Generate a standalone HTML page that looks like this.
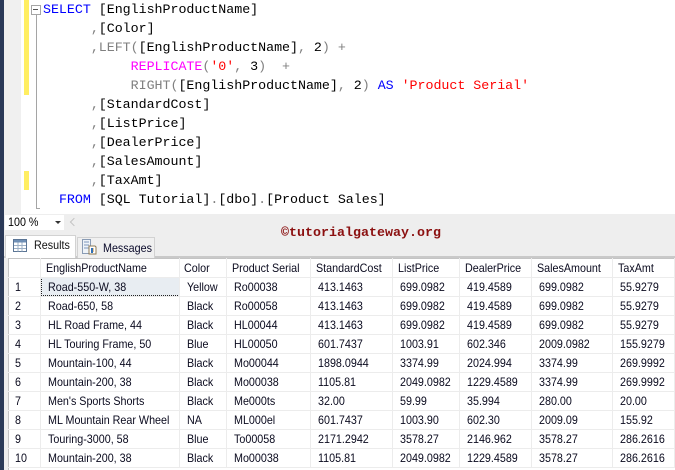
<!DOCTYPE html>
<html><head><meta charset="utf-8"><style>
html,body{margin:0;padding:0;width:675px;height:470px;overflow:hidden;background:#fff}
div,span{position:absolute;white-space:pre}
.c{font:13.33px/21px "Liberation Mono",monospace;letter-spacing:-.03px;color:#000;left:43px;height:19px}
.c span{position:static}
.b{color:#0000ff}.g{color:#808080}.m{color:#ff00ff}.r{color:#ff0000}
.t{font:12px/21px "Liberation Sans",sans-serif;color:#0a0a1e;height:19px;transform:scaleX(.895);transform-origin:0 0}
.v{background:#ececec;width:1px;top:258px;height:209px}
.h{background:#ececec;height:1px;left:8px;width:667px}
</style></head><body>
<div style="left:0;top:0;width:4px;height:470px;background:#2b3a58"></div>
<div style="left:4px;top:0;width:17px;height:214px;background:#f0f0f0"></div>
<div style="left:24px;top:0;width:5px;height:95px;background:#ffee62"></div>
<div style="left:24px;top:171px;width:5px;height:19px;background:#ffee62"></div>
<div style="left:36px;top:14px;width:1px;height:194px;background:#a5a5a5"></div>
<div style="left:36px;top:208px;width:4px;height:1px;background:#a5a5a5"></div>
<div style="left:31px;top:5px;width:8px;height:8px;border:1px solid #a5a5a5;background:#fff"></div>
<div style="left:33px;top:9px;width:5px;height:1px;background:#555"></div>

<div class="c" style="top:0"><span class="b">SELECT</span> [EnglishProductName]</div>
<div class="c" style="top:19px">      <span class="g">,</span>[Color]</div>
<div class="c" style="top:38px">      <span class="g">,LEFT(</span>[EnglishProductName]<span class="g">,</span> 2<span class="g">) +</span></div>
<div class="c" style="top:57px">           <span class="m">REPLICATE</span><span class="g">(</span><span class="r">'0'</span><span class="g">,</span> 3<span class="g">)  +</span></div>
<div class="c" style="top:76px">           <span class="g">RIGHT(</span>[EnglishProductName]<span class="g">,</span> 2<span class="g">)</span> <span class="b">AS</span> <span class="r">'Product Serial'</span></div>
<div class="c" style="top:95px">      <span class="g">,</span>[StandardCost]</div>
<div class="c" style="top:114px">      <span class="g">,</span>[ListPrice]</div>
<div class="c" style="top:133px">      <span class="g">,</span>[DealerPrice]</div>
<div class="c" style="top:152px">      <span class="g">,</span>[SalesAmount]</div>
<div class="c" style="top:171px">      <span class="g">,</span>[TaxAmt]</div>
<div class="c" style="top:190px">  <span class="b">FROM</span> [SQL Tutorial]<span class="g">.</span>[dbo]<span class="g">.</span>[Product Sales]</div>

<div style="left:4px;top:214px;width:671px;height:256px;background:#eeeeee"></div>
<div style="left:4px;top:256px;width:671px;height:2px;background:#c9c9c9"></div>
<div style="left:5px;top:215px;width:59px;height:15px;background:#fff"></div>
<div class="t" style="left:8px;top:212px;color:#000">100 %</div>
<div style="left:55px;top:221px;width:0;height:0;border-left:3px solid transparent;border-right:3px solid transparent;border-top:3px solid #333"></div>
<div style="left:71px;top:219px;width:5px;height:5px;border-left:1px solid #c4c4c4;border-bottom:1px solid #c4c4c4;transform:rotate(45deg)"></div>

<div style="left:5px;top:235px;width:71px;height:23px;background:#fff;border:1px solid #d2d2d2;border-bottom:none;box-sizing:border-box"></div>
<svg style="position:absolute;left:13px;top:239px" width="14" height="13" viewBox="0 0 14 13"><rect x=".5" y=".5" width="13" height="12" fill="#fff" stroke="#5b7595"/><rect x="1" y="1" width="12" height="2.5" fill="#6f8fb5"/><path d="M1 6.5h12M1 9.5h12M5 3.5v9M9 3.5v9" stroke="#9db0c6" fill="none"/></svg>
<div class="t" style="left:34px;top:235px;color:#111">Results</div>
<div style="left:77px;top:237px;width:78px;height:21px;background:#f0f0f0;border:1px solid #d2d2d2;border-bottom:none;box-sizing:border-box"></div>
<svg style="position:absolute;left:82px;top:239px" width="15" height="16" viewBox="0 0 15 16"><rect x=".5" y=".5" width="8" height="14" fill="#eef3f8" stroke="#8a9cb5"/><path d="M2 3h5M2 6h5M2 9h5" stroke="#7d97bd"/><path d="M7 7h6l1 1v7H7z" fill="#fff" stroke="#8d7a55"/><path d="M9 10h3M9 12h3" stroke="#d08a20"/><rect x="9" y="9" width="2" height="5" fill="#2f6fb5"/></svg>
<div class="t" style="left:103px;top:238px;color:#0a0a2a">Messages</div>

<div style="left:8px;top:258px;width:667px;height:212px;background:#fff"></div>
<div style="left:8px;top:258px;width:667px;height:1px;background:#c4c4c4"></div>
<div style="left:8px;top:258px;width:1px;height:212px;background:#c4c4c4"></div>
<div style="left:41px;top:277px;width:139px;height:19px;background:#e8edf2;box-sizing:border-box;border:1px dotted #222"></div>

<div class="v" style="left:40px"></div><div class="v" style="left:179px"></div><div class="v" style="left:226px"></div><div class="v" style="left:310px"></div><div class="v" style="left:392px"></div><div class="v" style="left:459px"></div><div class="v" style="left:531px"></div><div class="v" style="left:612px"></div><div class="v" style="left:674px"></div>
<div class="h" style="top:277px"></div><div class="h" style="top:296px"></div><div class="h" style="top:315px"></div><div class="h" style="top:334px"></div><div class="h" style="top:353px"></div><div class="h" style="top:372px"></div><div class="h" style="top:391px"></div><div class="h" style="top:410px"></div><div class="h" style="top:429px"></div><div class="h" style="top:448px"></div><div class="h" style="top:467px"></div>

<div class="t" style="left:46px;top:258px">EnglishProductName</div><div class="t" style="left:184px;top:258px">Color</div><div class="t" style="left:232px;top:258px">Product Serial</div><div class="t" style="left:316px;top:258px">StandardCost</div><div class="t" style="left:398px;top:258px">ListPrice</div><div class="t" style="left:465px;top:258px">DealerPrice</div><div class="t" style="left:537px;top:258px">SalesAmount</div><div class="t" style="left:618px;top:258px">TaxAmt</div>

<div class="t" style="left:15px;top:277px">1</div><div class="t" style="left:48px;top:277px">Road-550-W, 38</div><div class="t" style="left:187px;top:277px">Yellow</div><div class="t" style="left:234px;top:277px">Ro00038</div><div class="t" style="left:318px;top:277px">413.1463</div><div class="t" style="left:400px;top:277px">699.0982</div><div class="t" style="left:467px;top:277px">419.4589</div><div class="t" style="left:539px;top:277px">699.0982</div><div class="t" style="left:620px;top:277px">55.9279</div>

<div class="t" style="left:15px;top:296px">2</div><div class="t" style="left:48px;top:296px">Road-650, 58</div><div class="t" style="left:187px;top:296px">Black</div><div class="t" style="left:234px;top:296px">Ro00058</div><div class="t" style="left:318px;top:296px">413.1463</div><div class="t" style="left:400px;top:296px">699.0982</div><div class="t" style="left:467px;top:296px">419.4589</div><div class="t" style="left:539px;top:296px">699.0982</div><div class="t" style="left:620px;top:296px">55.9279</div>

<div class="t" style="left:15px;top:315px">3</div><div class="t" style="left:48px;top:315px">HL Road Frame, 44</div><div class="t" style="left:187px;top:315px">Black</div><div class="t" style="left:234px;top:315px">HL00044</div><div class="t" style="left:318px;top:315px">413.1463</div><div class="t" style="left:400px;top:315px">699.0982</div><div class="t" style="left:467px;top:315px">419.4589</div><div class="t" style="left:539px;top:315px">699.0982</div><div class="t" style="left:620px;top:315px">55.9279</div>

<div class="t" style="left:15px;top:334px">4</div><div class="t" style="left:48px;top:334px">HL Touring Frame, 50</div><div class="t" style="left:187px;top:334px">Blue</div><div class="t" style="left:234px;top:334px">HL00050</div><div class="t" style="left:318px;top:334px">601.7437</div><div class="t" style="left:400px;top:334px">1003.91</div><div class="t" style="left:467px;top:334px">602.346</div><div class="t" style="left:539px;top:334px">2009.0982</div><div class="t" style="left:620px;top:334px">155.9279</div>

<div class="t" style="left:15px;top:353px">5</div><div class="t" style="left:48px;top:353px">Mountain-100, 44</div><div class="t" style="left:187px;top:353px">Black</div><div class="t" style="left:234px;top:353px">Mo00044</div><div class="t" style="left:318px;top:353px">1898.0944</div><div class="t" style="left:400px;top:353px">3374.99</div><div class="t" style="left:467px;top:353px">2024.994</div><div class="t" style="left:539px;top:353px">3374.99</div><div class="t" style="left:620px;top:353px">269.9992</div>

<div class="t" style="left:15px;top:372px">6</div><div class="t" style="left:48px;top:372px">Mountain-200, 38</div><div class="t" style="left:187px;top:372px">Black</div><div class="t" style="left:234px;top:372px">Mo00038</div><div class="t" style="left:318px;top:372px">1105.81</div><div class="t" style="left:400px;top:372px">2049.0982</div><div class="t" style="left:467px;top:372px">1229.4589</div><div class="t" style="left:539px;top:372px">3374.99</div><div class="t" style="left:620px;top:372px">269.9992</div>

<div class="t" style="left:15px;top:391px">7</div><div class="t" style="left:48px;top:391px">Men's Sports Shorts</div><div class="t" style="left:187px;top:391px">Black</div><div class="t" style="left:234px;top:391px">Me000ts</div><div class="t" style="left:318px;top:391px">32.00</div><div class="t" style="left:400px;top:391px">59.99</div><div class="t" style="left:467px;top:391px">35.994</div><div class="t" style="left:539px;top:391px">280.00</div><div class="t" style="left:620px;top:391px">20.00</div>

<div class="t" style="left:15px;top:410px">8</div><div class="t" style="left:48px;top:410px">ML Mountain Rear Wheel</div><div class="t" style="left:187px;top:410px">NA</div><div class="t" style="left:234px;top:410px">ML000el</div><div class="t" style="left:318px;top:410px">601.7437</div><div class="t" style="left:400px;top:410px">1003.90</div><div class="t" style="left:467px;top:410px">602.30</div><div class="t" style="left:539px;top:410px">2009.09</div><div class="t" style="left:620px;top:410px">155.92</div>

<div class="t" style="left:15px;top:429px">9</div><div class="t" style="left:48px;top:429px">Touring-3000, 58</div><div class="t" style="left:187px;top:429px">Blue</div><div class="t" style="left:234px;top:429px">To00058</div><div class="t" style="left:318px;top:429px">2171.2942</div><div class="t" style="left:400px;top:429px">3578.27</div><div class="t" style="left:467px;top:429px">2146.962</div><div class="t" style="left:539px;top:429px">3578.27</div><div class="t" style="left:620px;top:429px">286.2616</div>

<div class="t" style="left:15px;top:448px">10</div><div class="t" style="left:48px;top:448px">Mountain-200, 38</div><div class="t" style="left:187px;top:448px">Black</div><div class="t" style="left:234px;top:448px">Mo00038</div><div class="t" style="left:318px;top:448px">1105.81</div><div class="t" style="left:400px;top:448px">2049.0982</div><div class="t" style="left:467px;top:448px">1229.4589</div><div class="t" style="left:539px;top:448px">3578.27</div><div class="t" style="left:620px;top:448px">286.2616</div>

<div style="left:281px;top:224px;font:bold 13.33px/19px 'Liberation Mono',monospace;color:#8b1010">©tutorialgateway.org</div>
</body></html>
